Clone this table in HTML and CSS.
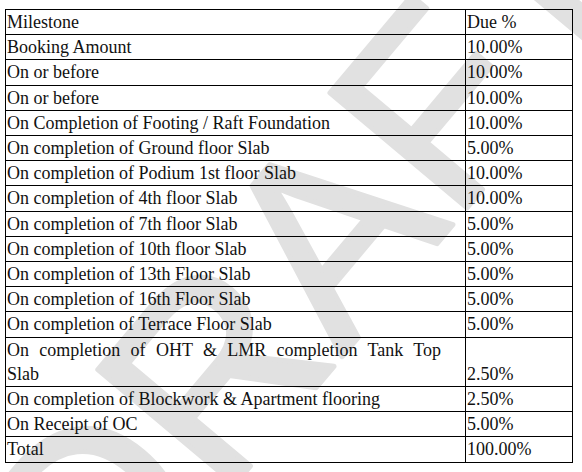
FILE: index.html
```html
<!DOCTYPE html>
<html lang="en">
<head>
    <meta charset="UTF-8">
    <meta name="viewport" content="width=device-width, initial-scale=1.0">
    <title>Payment Schedule</title>
    <link rel="stylesheet" href="styles.css">
</head>
<body>
    <!-- DRAFT watermark behind the table -->
    <svg class="watermark" width="582" height="472" viewBox="0 0 582 472">
        <text x="310" y="255" text-anchor="middle" dominant-baseline="central" transform="rotate(-50 310 255)">DRAFT</text>
    </svg>

    <table class="schedule">
        <tr><td class="milestone">Milestone</td><td class="due">Due %</td></tr>
        <tr><td>Booking Amount</td><td>10.00%</td></tr>
        <tr><td>On or before</td><td>10.00%</td></tr>
        <tr><td>On or before</td><td>10.00%</td></tr>
        <tr><td>On Completion of Footing / Raft Foundation</td><td>10.00%</td></tr>
        <tr><td>On completion of Ground floor Slab</td><td>5.00%</td></tr>
        <tr><td>On completion of Podium 1st floor Slab</td><td>10.00%</td></tr>
        <tr><td>On completion of 4th floor Slab</td><td>10.00%</td></tr>
        <tr><td>On completion of 7th floor Slab</td><td>5.00%</td></tr>
        <tr><td>On completion of 10th floor Slab</td><td>5.00%</td></tr>
        <tr><td>On completion of 13th Floor Slab</td><td>5.00%</td></tr>
        <tr><td>On completion of 16th Floor Slab</td><td>5.00%</td></tr>
        <tr><td>On completion of Terrace Floor Slab</td><td>5.00%</td></tr>
        <tr><td><span class="justified">On completion of OHT &amp; LMR completion Tank Top</span>Slab</td><td>2.50%</td></tr>
        <tr><td>On completion of Blockwork &amp; Apartment flooring</td><td>2.50%</td></tr>
        <tr><td>On Receipt of OC</td><td>5.00%</td></tr>
        <tr><td>Total</td><td>100.00%</td></tr>
    </table>
</body>
</html>
```

FILE: styles.css
```css
body {
    margin: 0;
    background: #fff;
    font-family: "Liberation Serif", "Times New Roman", serif;
    color: #111;
    position: relative;
    width: 582px;
    height: 472px;
    overflow: hidden;
}

.watermark {
    position: absolute;
    top: 0;
    left: 0;
    z-index: 0;
}

.watermark text {
    font-family: "Liberation Sans", Arial, sans-serif;
    font-size: 260px;
    fill: #e1e1e1;
    stroke: #e1e1e1;
    stroke-width: 5;
    stroke-linejoin: round;
}

.schedule {
    position: relative;
    z-index: 1;
    margin: 9px 0 0 5px;
    width: 568px;
    border-collapse: collapse;
    table-layout: fixed;
}

.schedule td {
    border: 1px solid #000;
    padding: 0 0 0 1px;
    font-size: 18px;
    line-height: 24.2px;
    vertical-align: bottom;
}

.schedule .milestone {
    width: 458px;
}

/* the wrapped line is stretched like a justified paragraph */
.justified {
    display: block;
    width: 434px;
    text-align: justify;
    text-align-last: justify;
}
```
